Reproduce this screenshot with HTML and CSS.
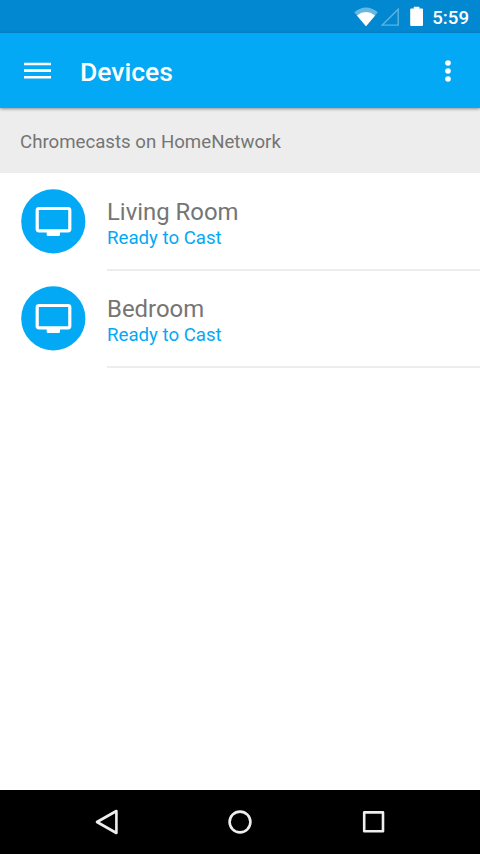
FILE: index.html
```html
<!DOCTYPE html>
<html lang="en">
<head>
<meta charset="utf-8">
<title>Devices</title>
<link rel="stylesheet" href="styles.css">
</head>
<body>
<div class="screen">
  <div class="status-bar">
    <svg class="status-icons" width="70" height="33" viewBox="354 0 70 33" aria-hidden="true">
      <path d="M354.2 12.2Q366 2.6 377.8 12.2L366 26.2Z" fill="#fff" opacity=".4"/>
      <path d="M356.9 15.4Q366 8.8 375.1 15.4L366 26.2Z" fill="#fff"/>
      <path d="M382.3 25.1L398.2 9.2V25.1Z" fill="none" stroke="#fff" stroke-width="1.4" opacity=".36"/>
      <path d="M413.8 6.7H419.4V8.5H422Q423 8.5 423 9.5V25Q423 26 422 26H411.2Q410.2 26 410.2 25V9.5Q410.2 8.5 411.2 8.5H413.8Z" fill="#fff"/>
    </svg>
    <span class="clock">5:59</span>
  </div>
  <header class="app-bar">
    <svg class="menu" width="27" height="17" viewBox="0 0 27 17" aria-hidden="true">
      <path d="M0 2H27M0 8.6H27M0 15.3H27" stroke="#fff" stroke-width="2.6"/>
    </svg>
    <h1 class="title">Devices</h1>
    <svg class="more" width="6" height="22" viewBox="0 0 6 22" fill="#fff" aria-hidden="true">
      <circle cx="3" cy="3" r="2.8"/><circle cx="3" cy="11" r="2.8"/><circle cx="3" cy="19" r="2.8"/>
    </svg>
  </header>
  <h2 class="section">Chromecasts on HomeNetwork</h2>
  <main class="list">
    <div class="row">
      <svg class="avatar" width="66" height="66" viewBox="0 0 66 66" aria-hidden="true">
        <circle cx="33.3" cy="33.4" r="32.1" fill="#03a9f4"/>
        <rect x="17.2" y="20.5" width="32.6" height="22.4" rx="1.8" fill="none" stroke="#fff" stroke-width="3.2"/>
        <path d="M26.7 42.9H40V46.8Q40 48 38.8 48H27.9Q26.7 48 26.7 46.8Z" fill="#fff"/>
      </svg>
      <div class="info"><div class="name">Living Room</div><div class="state">Ready to Cast</div></div>
    </div>
    <div class="row">
      <svg class="avatar" width="66" height="66" viewBox="0 0 66 66" aria-hidden="true">
        <circle cx="33.3" cy="33.4" r="32.1" fill="#03a9f4"/>
        <rect x="17.2" y="20.5" width="32.6" height="22.4" rx="1.8" fill="none" stroke="#fff" stroke-width="3.2"/>
        <path d="M26.7 42.9H40V46.8Q40 48 38.8 48H27.9Q26.7 48 26.7 46.8Z" fill="#fff"/>
      </svg>
      <div class="info"><div class="name">Bedroom</div><div class="state">Ready to Cast</div></div>
    </div>
  </main>
  <nav class="nav-bar">
    <svg width="26" height="26" viewBox="0 0 26 26" aria-hidden="true"><path d="M3 13L22.4 2V24Z"/></svg>
    <svg width="26" height="26" viewBox="0 0 26 26" aria-hidden="true"><circle cx="13" cy="13" r="10.4"/></svg>
    <svg width="26" height="26" viewBox="0 0 26 26" aria-hidden="true"><rect x="3.2" y="3.4" width="18.8" height="18.8"/></svg>
  </nav>
</div>
</body>
</html>
```
FILE: styles.css
```css
* { box-sizing: border-box; }
body { margin: 0; font-family: Roboto, "Liberation Sans", sans-serif; background: #fff; }
.screen { width: 480px; height: 854px; display: flex; flex-direction: column; overflow: hidden; }
.status-bar { height: 33px; display: flex; justify-content: flex-end; padding-right: 11px; background: #0288d1; color: #fff; }
.status-icons { margin-right: 8px; }
.clock { font-size: 18.67px; font-weight: 500; line-height: 36px; }
.app-bar { height: 75px; display: flex; align-items: center; padding: 0 29px 0 24px; background: #03a9f4; color: #fff; box-shadow: 0 1px 3px rgba(0, 0, 0, .4); position: relative; }
.menu { margin-right: 29px; }
.title { margin: 2px 0 0; font-size: 26.5px; font-weight: 500; line-height: 32px; }
.more { margin-left: auto; }
.section { height: 65px; margin: 0; padding: 2px 0 0 20px; background: #ededed; color: #757575; font-size: 18.67px; font-weight: 400; line-height: 65px; }
.list { flex: 1; }
.row { height: 97px; display: flex; padding-left: 20px; }
.avatar { margin-top: 15px; }
.info { flex: 1; margin-left: 21px; padding-top: 25px; height: 98px; border-bottom: 2px solid #ededed; }
.name { color: #757575; font-size: 23.9px; line-height: 28px; }
.state { color: #03a9f4; font-size: 18.67px; line-height: 24px; }
.nav-bar { height: 64px; display: flex; align-items: center; justify-content: center; gap: 107.5px; background: #000; }
.nav-bar svg { fill: none; stroke: #eee; stroke-width: 2.6; stroke-linejoin: round; }
```
